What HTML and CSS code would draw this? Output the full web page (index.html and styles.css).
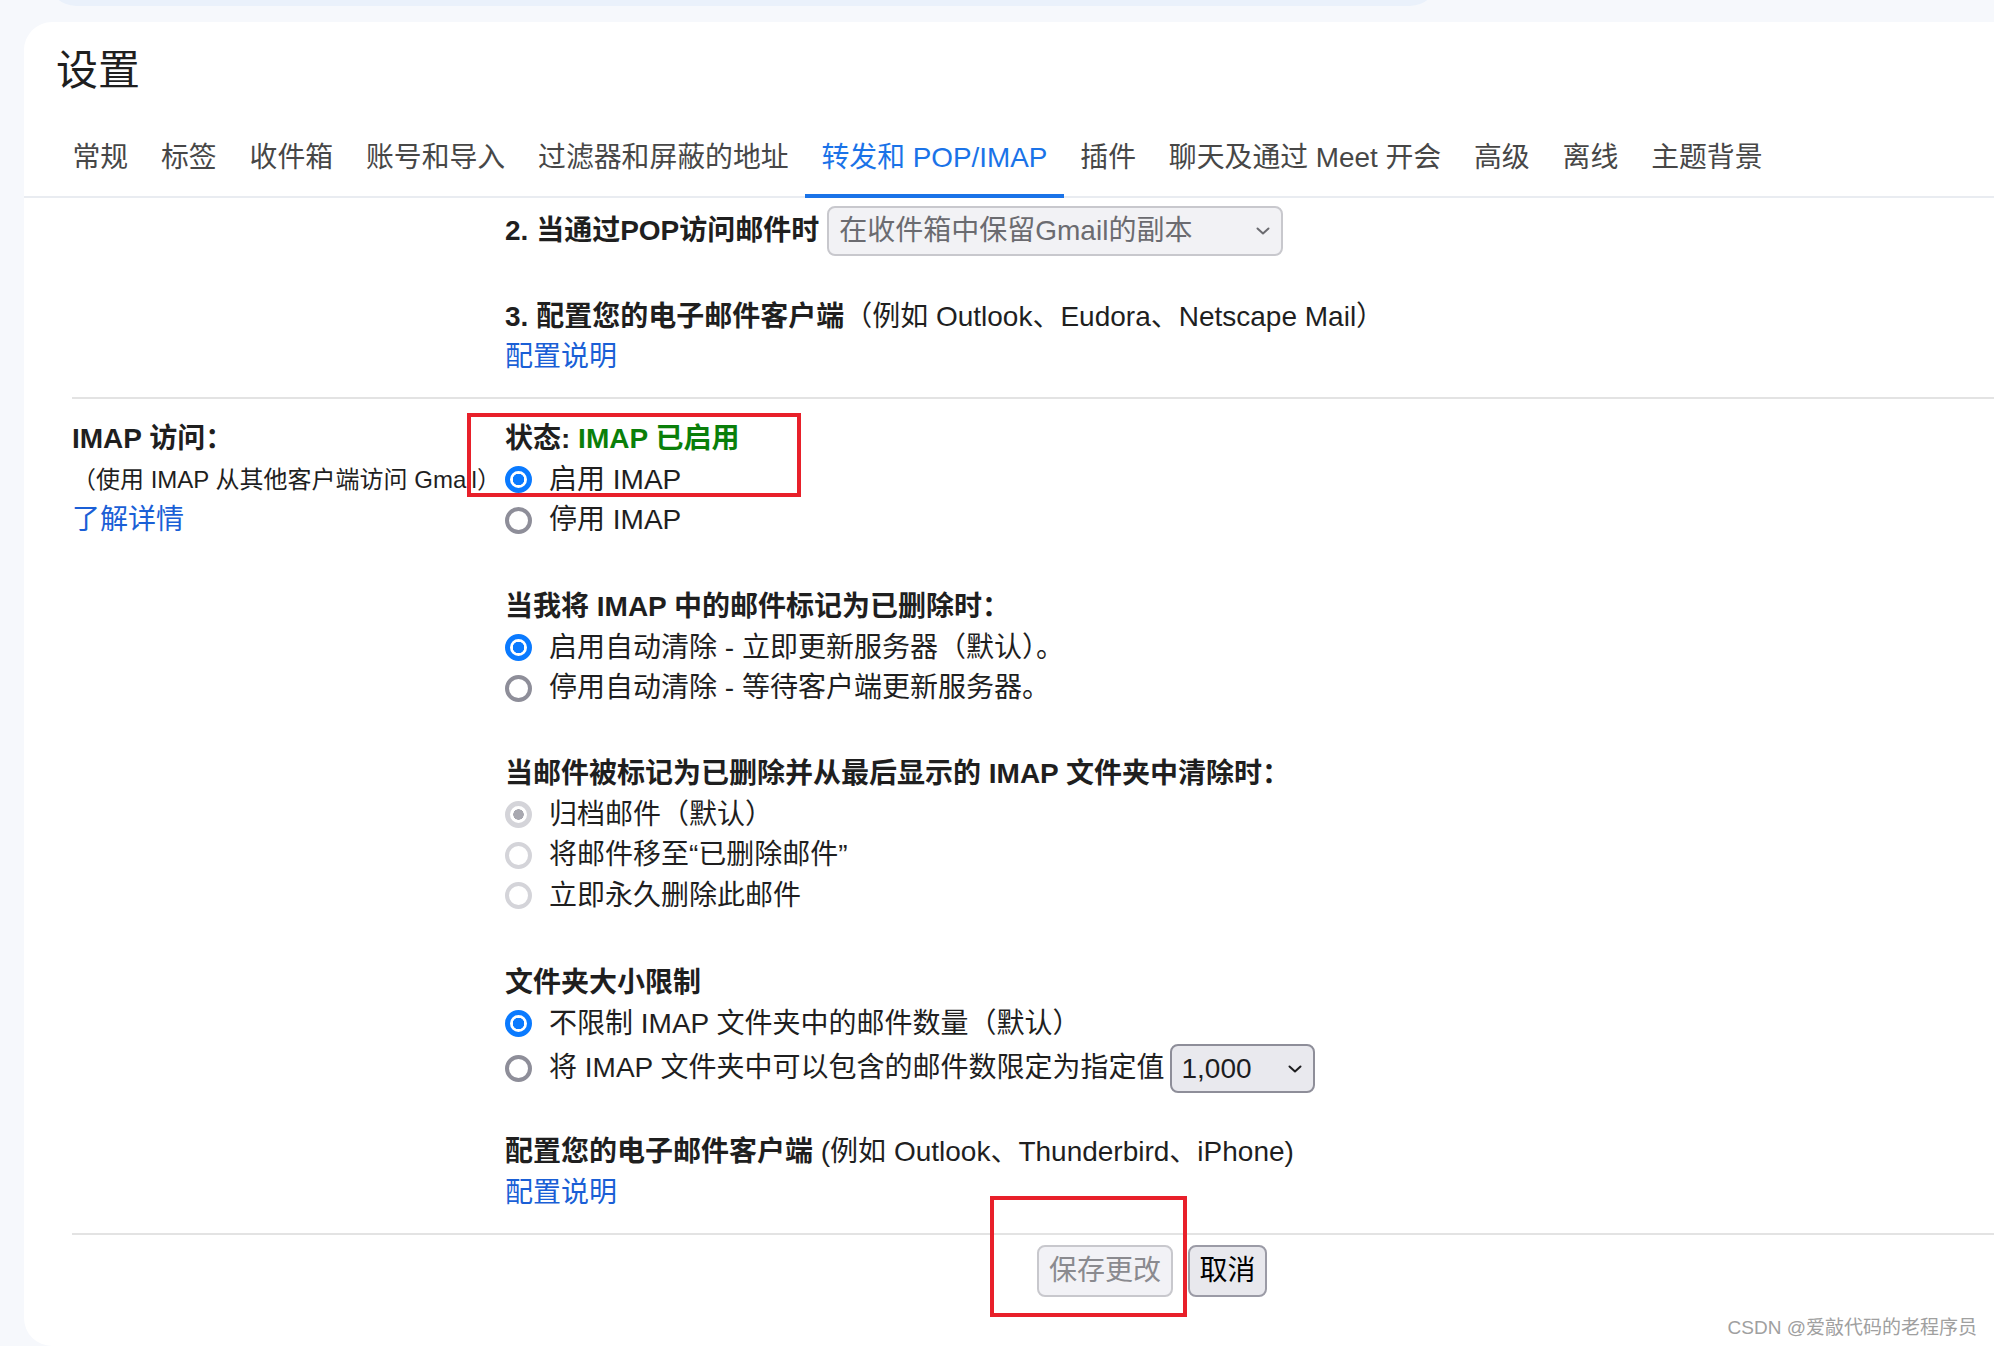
FILE: index.html
```html
<!DOCTYPE html>
<html lang="zh-CN">
<head>
<meta charset="utf-8">
<title>设置</title>
<link rel="stylesheet" href="styles.css">
</head>
<body>
<div class="topbar"></div>
<main class="card">
  <h1 class="title">设置</h1>
  <nav class="tabs">
    <span class="tab">常规</span>
    <span class="tab">标签</span>
    <span class="tab">收件箱</span>
    <span class="tab">账号和导入</span>
    <span class="tab">过滤器和屏蔽的地址</span>
    <span class="tab active">转发和 POP/IMAP</span>
    <span class="tab">插件</span>
    <span class="tab">聊天及通过 Meet 开会</span>
    <span class="tab">高级</span>
    <span class="tab">离线</span>
    <span class="tab">主题背景</span>
  </nav>
  <div class="content">
    <section class="section pop">
      <div class="label"></div>
      <div class="value">
        <div class="select-row">
          <b>2. 当通过POP访问邮件时</b>
          <span class="select select-wide disabled"><span>在收件箱中保留Gmail的副本</span>
            <svg class="chev" viewBox="0 0 14 8" width="14" height="8"><path d="M1.5 1.5 L7 6.5 L12.5 1.5" fill="none" stroke="currentColor" stroke-width="2" stroke-linecap="round" stroke-linejoin="round"/></svg>
          </span>
        </div>
        <div class="line line-gap"><b>3. 配置您的电子邮件客户端</b>（例如 Outlook、Eudora、Netscape Mail）</div>
        <div class="line"><a class="link">配置说明</a></div>
      </div>
    </section>
    <section class="section imap">
      <div class="label">
        <div class="line"><b>IMAP 访问：</b></div>
        <div class="line small">（使用 IMAP 从其他客户端访问 Gmail）</div>
        <div class="line"><a class="link">了解详情</a></div>
      </div>
      <div class="value">
        <div class="group">
          <div class="line"><b>状态: <span class="ok">IMAP 已启用</span></b></div>
          <div class="opt"><span class="radio on"></span>启用 IMAP</div>
          <div class="opt"><span class="radio"></span>停用 IMAP</div>
        </div>
        <div class="group">
          <div class="line"><b>当我将 IMAP 中的邮件标记为已删除时：</b></div>
          <div class="opt"><span class="radio on"></span>启用自动清除 - 立即更新服务器（默认）。</div>
          <div class="opt"><span class="radio"></span>停用自动清除 - 等待客户端更新服务器。</div>
        </div>
        <div class="group group-mid">
          <div class="line"><b>当邮件被标记为已删除并从最后显示的 IMAP 文件夹中清除时：</b></div>
          <div class="opt"><span class="radio on off"></span>归档邮件（默认）</div>
          <div class="opt"><span class="radio off"></span>将邮件移至“已删除邮件”</div>
          <div class="opt"><span class="radio off"></span>立即永久删除此邮件</div>
        </div>
        <div class="group group-wide">
          <div class="line"><b>文件夹大小限制</b></div>
          <div class="opt"><span class="radio on"></span>不限制 IMAP 文件夹中的邮件数量（默认）</div>
          <div class="opt opt-select"><span class="radio"></span>将 IMAP 文件夹中可以包含的邮件数限定为指定值<span class="select select-small"><span>1,000</span>
            <svg class="chev" viewBox="0 0 14 8" width="14" height="8"><path d="M1.5 1.5 L7 6.5 L12.5 1.5" fill="none" stroke="currentColor" stroke-width="2" stroke-linecap="round" stroke-linejoin="round"/></svg>
          </span></div>
        </div>
        <div class="group group-tight">
          <div class="line"><b>配置您的电子邮件客户端</b> (例如 Outlook、Thunderbird、iPhone)</div>
          <div class="line"><a class="link">配置说明</a></div>
        </div>
      </div>
    </section>
    <div class="actions">
      <button class="btn btn-save" type="button">保存更改</button>
      <button class="btn btn-cancel" type="button">取消</button>
    </div>
  </div>
</main>
<div class="annot annot-status"></div>
<div class="annot annot-save"></div>
<div class="watermark">CSDN @爱敲代码的老程序员</div>
</body>
</html>
```

FILE: styles.css
```css
* { box-sizing: border-box; }
html, body { margin: 0; }
body {
  width: 1994px;
  height: 1346px;
  overflow: hidden;
  position: relative;
  background: #f6f8fc;
  font-family: "Liberation Sans", "Noto Sans CJK SC", sans-serif;
  color: #1f1f1f;
}
.topbar {
  width: 1390px;
  height: 56px;
  margin: -50px 0 0 48px;
  background: #eaf1fb;
  border-radius: 28px;
}
.card {
  margin: 16px 0 0 24px;
  height: 1324px;
  background: #fff;
  border-radius: 28px 0 0 28px;
  padding: 21px 0 0 32px;
}
.title {
  margin: 0;
  font-size: 42px;
  line-height: 56px;
  font-weight: 400;
  color: #1f1f1f;
}
.tabs {
  display: flex;
  margin: 39px 0 0 -32px;
  padding-left: 32px;
  background: linear-gradient(#e9ecf1, #e9ecf1) left bottom / 100% 2px no-repeat;
}
.tab {
  padding: 0 16.45px 16px;
  border-bottom: 4px solid transparent;
  font-size: 27.85px;
  line-height: 40px;
  color: #474747;
  white-space: nowrap;
}
.tab.active {
  color: #1a73e8;
  border-bottom-color: #1a73e8;
}
.content {
  margin-left: 16px;
  font-size: 28px;
  line-height: 40.5px;
}
.section {
  display: grid;
  grid-template-columns: 433px 1fr;
  padding: 20px 0 19.5px;
}
.section.pop { padding-top: 8px; padding-bottom: 19.25px; }
.section + .section { border-top: 2px solid #e3e3e3; }
.line { height: 40.5px; white-space: nowrap; }
.line-gap { margin-top: 40.75px; }
.small { font-size: 24px; }
b { font-weight: 700; }
.link { color: #1a5fd6; text-decoration: none; }
.ok { color: #0a7f0a; }
.group + .group { margin-top: 46.5px; }
.group.group-mid { margin-top: 45.5px; }
.group.group-wide { margin-top: 47px; }
.group.group-tight { margin-top: 39px; }
.opt {
  display: flex;
  align-items: center;
  height: 40.5px;
  white-space: nowrap;
}
.opt-select { height: 49px; }
.radio {
  flex: none;
  width: 27px;
  height: 27px;
  margin-right: 17px;
  border-radius: 50%;
  border: 4px solid #8e8e99;
  background: #fff;
}
.radio.on {
  border: 5px solid #0a7aff;
  background: radial-gradient(circle, #0a7aff 0 5.5px, #fff 6px);
}
.radio.off { border-color: #d4d4d9; }
.radio.on.off {
  border: 5px solid #d4d4d9;
  background: radial-gradient(circle, #a8a8b0 0 5px, #fff 5.5px);
}
.select-row {
  display: flex;
  align-items: center;
  height: 50px;
  white-space: nowrap;
}
.select {
  display: flex;
  align-items: center;
  justify-content: space-between;
  height: 50px;
  border-radius: 8px;
  border: 2px solid #c8c8cd;
  background: #f2f2f5;
  padding: 0 11px 0 10px;
  font-size: 28px;
  line-height: 40px;
  font-weight: 400;
}
.select-wide {
  width: 456px;
  margin-left: 8px;
  color: #6b6b70;
}
.select-wide .chev { color: #6b6b70; }
.select-small {
  width: 145px;
  height: 49px;
  margin-left: 5px;
  border-color: #8e8e99;
  background: #e9e9ee;
  color: #1d1d1f;
}
.select-small .chev { color: #1d1d1f; }
.actions {
  display: flex;
  gap: 15px;
  border-top: 2px solid #e3e3e3;
  padding: 10px 0 0 965px;
}
.btn {
  height: 52px;
  padding: 0 10px;
  border-radius: 8px;
  font-family: "Liberation Sans", "Noto Sans CJK SC", sans-serif;
  font-size: 28px;
  line-height: 40px;
}
.btn-save {
  border: 2px solid #c8c8cd;
  background: #f2f2f6;
  color: #8a8a8f;
}
.btn-cancel {
  padding: 0 9.5px;
  border: 2px solid #9b9ba6;
  background: #e8e8ed;
  color: #000;
}
.annot {
  position: absolute;
  border: 4px solid #e8202a;
}
.annot-status { left: 467px; top: 413px; width: 334px; height: 84px; }
.annot-save { left: 990px; top: 1196px; width: 197px; height: 121px; }
.watermark {
  position: absolute;
  right: 17px;
  top: 1314px;
  font-size: 19px;
  line-height: 28px;
  color: #a0a0a0;
  white-space: nowrap;
}
```
